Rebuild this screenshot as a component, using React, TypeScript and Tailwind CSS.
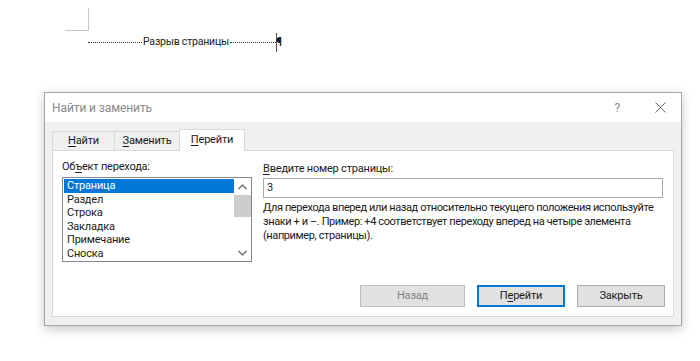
import React from 'react';

const font = { fontFamily: 'Roboto, "Noto Sans", sans-serif' };

const items = ['Страница', 'Раздел', 'Строка', 'Закладка', 'Примечание', 'Сноска'];

function Tab({ label, u, w, active }: { label: string; u: number; w: string; active?: boolean }) {
  return (
    <div
      className={`flex items-center justify-center border border-b-0 border-[#d9d9d9] -ml-px first:ml-0 ${w} ${
        active ? 'bg-white h-[22px] relative z-10 -mb-px pb-[1px]' : 'bg-[#f0f0f0] h-[19px]'
      }`}
    >
      <span>
        <span className="underline underline-offset-2">{label.slice(0, u)}</span>
        {label.slice(u)}
      </span>
    </div>
  );
}

export default function App() {
  return (
    <div
      className="w-[700px] h-[361px] bg-white text-[11px] tracking-[-0.2px] text-[#1a1a1a] overflow-hidden"
      style={font}
    >
      {/* page content */}
      <div className="h-[92px] relative">
        <div className="absolute left-[65px] top-[8px] w-[24px] h-[23px] border-r border-b border-[#c8c8c8]" />
        <div className="absolute left-[88px] top-[33px] flex items-center h-[18px]">
          <div className="w-[54px] border-t border-dotted border-[#333]" />
          <span className="text-[10.5px] leading-none px-[1px] text-[#222]">Разрыв страницы</span>
          <div className="w-[46px] border-t border-dotted border-[#333]" />
          <div className="w-px h-[19px] bg-[#555]" />
          <span className="text-[12px] font-bold leading-none -ml-[1px]">¶</span>
        </div>
      </div>

      {/* dialog */}
      <div className="ml-[44px] w-[638px] h-[234px] border border-[#a6a6a6] bg-[#f0f0f0] shadow-[0_3px_10px_rgba(0,0,0,0.22)] flex flex-col">
        <div className="h-[29px] bg-white flex items-center pl-[7px] pr-[15px]">
          <span className="text-[12px] tracking-[-0.1px] text-[#8a8a8a] flex-1">Найти и заменить</span>
          <span className="text-[12px] text-[#8a8a8a] mr-[35px]">?</span>
          <svg width="11" height="11" viewBox="0 0 11 11" className="text-[#666]">
            <path d="M0.5 0.5 L10.5 10.5 M10.5 0.5 L0.5 10.5" stroke="currentColor" strokeWidth="1" />
          </svg>
        </div>

        <div className="flex-1 px-[7px] pt-[7px] pb-[8px] flex flex-col">
          <div className="flex items-end h-[21px]">
            <Tab label="Найти" u={1} w="w-[63px]" />
            <Tab label="Заменить" u={1} w="w-[66px]" />
            <Tab label="Перейти" u={1} w="w-[66px]" active />
          </div>
          <div className="flex-1 bg-white border border-[#d9d9d9] flex flex-col pl-[9px] pr-[8px] pt-[9px] pb-[9px]">
            <div className="flex gap-[11px]">
              <div className="w-[190px]">
                <div className="h-[14px] leading-[14px]">
                  Об<span className="underline underline-offset-2">ъ</span>ект перехода:
                </div>
                <div className="mt-[3px] h-[85px] border border-[#828790] flex">
                  <div className="flex-1 pt-[1px] pl-[1px]">
                    {items.map((it, i) => (
                      <div
                        key={it}
                        className={`h-[13.6px] leading-[13.6px] pl-[3px] ${i === 0 ? 'bg-[#0078d7] text-white' : ''}`}
                      >
                        {it}
                      </div>
                    ))}
                  </div>
                  <div className="w-[17px] flex flex-col items-center bg-white">
                    <div className="h-[17px] flex items-center justify-center">
                      <svg width="9" height="6" viewBox="0 0 9 6">
                        <path d="M0.5 5 L4.5 1 L8.5 5" fill="none" stroke="#606060" strokeWidth="1.2" />
                      </svg>
                    </div>
                    <div className="w-[17px] h-[22px] bg-[#cdcdcd]" />
                    <div className="flex-1" />
                    <div className="h-[17px] flex items-center justify-center">
                      <svg width="9" height="6" viewBox="0 0 9 6">
                        <path d="M0.5 1 L4.5 5 L8.5 1" fill="none" stroke="#606060" strokeWidth="1.2" />
                      </svg>
                    </div>
                  </div>
                </div>
              </div>
              <div className="w-[400px] pt-[2px]">
                <div className="h-[14px] leading-[14px]">
                  <span className="underline underline-offset-2">В</span>ведите номер страницы:
                </div>
                <div className="mt-[2px] h-[20px] border border-[#a9a9a9] flex items-center pl-[3px]">3</div>
                <p className="mt-[3px] leading-[14px] tracking-[-0.4px] whitespace-nowrap">
                  Для перехода вперед или назад относительно текущего положения используйте
                  <br />
                  знаки + и –. Пример: +4 соответствует переходу вперед на четыре элемента
                  <br />
                  (например, страницы).
                </p>
              </div>
            </div>
            <div className="mt-auto flex justify-end gap-[12px]">
              <button className="w-[105px] h-[22px] bg-[#e1e1e1] border border-[#bfbfbf] text-[#838383]">Назад</button>
              <button className="w-[88px] h-[22px] bg-[#e1e1e1] border-2 border-[#0078d7]">
                П<span className="underline underline-offset-2">е</span>рейти
              </button>
              <button className="w-[88px] h-[22px] bg-[#e1e1e1] border border-[#adadad]">Закрыть</button>
            </div>
          </div>
        </div>
      </div>
    </div>
  );
}
